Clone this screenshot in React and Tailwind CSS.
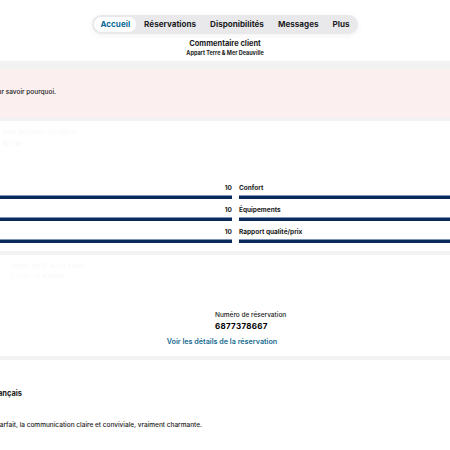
import React from 'react';

const tabs = ['Accueil', 'Réservations', 'Disponibilités', 'Messages', 'Plus'];

const scores = [
  { left: 'Propreté', right: 'Confort' },
  { left: 'Personnel', right: 'Équipements' },
  { left: 'Situation géographique', right: 'Rapport qualité/prix' },
];

const Bar = () => <div className="h-[3px] w-full bg-[#0b2a5c] shadow-[0_-1px_0_#7d93b8]" />;

const App = () => {
  return (
    <div
      className="w-[450px] h-[450px] overflow-hidden bg-white text-[#1a1a1a]"
      style={{ fontFamily: 'Inter, "Open Sans", sans-serif' }}
    >
      {/* top nav */}
      <div className="flex justify-center pt-[15px]">
        <div className="flex items-center gap-[2px] rounded-full bg-[#e9e9ec] p-[2px] shadow-[0_1px_6px_rgba(0,0,0,0.06)]">
          {tabs.map((t, i) => (
            <div
              key={t}
              className={
                i === 0
                  ? 'rounded-full bg-white px-[6px] h-[15px] flex items-center text-[8.1px] font-bold text-[#0a6a96]'
                  : 'px-[6px] h-[15px] flex items-center text-[8.1px] font-bold text-[#1c1c1e]'
              }
            >
              {t}
            </div>
          ))}
        </div>
      </div>

      <div className="mt-[6px] flex flex-col items-center leading-none">
        <div className="text-[7.5px] font-bold">Commentaire client</div>
        <div className="mt-[3px] text-[5.5px] font-bold">Appart Terre &amp; Mer Deauville</div>
      </div>

      {/* alert */}
      <div className="mt-[5px] border-t-[8px] border-b-[4px] border-[#f2f2f2] bg-[#fcefef] h-[60px] flex items-center">
        <div className="w-[56px] flex justify-end whitespace-nowrap text-[6.5px] font-medium">
          Cet avis a été masqué. Cliquez ici pour savoir pourquoi.
        </div>
      </div>

      <div className="h-[5px]" />
      <div className="pl-[2px] text-[6.5px] text-[#f9f9f9] leading-[12px]">
        <div>Note générale du séjour</div>
        <div className="font-bold">10 / 10</div>
      </div>

      {/* scores */}
      <div className="mt-[34px] grid grid-cols-[232px_1fr] gap-x-[7px]">
        {scores.map((s) => (
          <React.Fragment key={s.right}>
            <div className="flex flex-col h-[22px]">
              <div className="flex justify-end text-[6.5px] font-bold leading-none h-[9px] items-center whitespace-nowrap">
                <span>10</span>
              </div>
              <div className="mt-[3px]">
                <Bar />
              </div>
            </div>
            <div className="flex flex-col h-[22px]">
              <div className="text-[6.5px] font-bold leading-none h-[9px] flex items-center whitespace-nowrap">
                {s.right}
              </div>
              <div className="mt-[3px]">
                <Bar />
              </div>
            </div>
          </React.Fragment>
        ))}
      </div>

      <div className="mt-[1px] h-[4px] bg-[#f2f2f2]" />

      <div className="pl-[10px] pt-[6px] text-[6.5px] text-[#f9f9f9] leading-[10px]">
        <div>Séjour du 12 au 14 juillet</div>
        <div>2 nuits · 2 adultes</div>
      </div>

      {/* booking */}
      <div className="mt-[31px]">
        <div className="pl-[215px] leading-none">
          <div className="text-[6.5px] font-medium">Numéro de réservation</div>
          <div className="mt-[3px] text-[8px] font-bold tracking-[0.3px] text-black">6877378667</div>
        </div>
        <div className="mt-[8px] flex justify-center pr-[6px] text-[7.2px] font-semibold text-[#176c90] leading-none">
          Voir les détails de la réservation
        </div>
      </div>

      <div className="mt-[11px] h-[4px] bg-[#f2f2f2]" />

      {/* review body */}
      <div className="mt-[30px] w-[22px] flex justify-end whitespace-nowrap text-[7.5px] font-bold leading-none">
        Rédigé en français
      </div>
      <div className="mt-[25px] w-[202px] flex justify-end whitespace-nowrap text-[6.5px] font-medium leading-none">
        Tout était parfait, la communication claire et conviviale, vraiment charmante.
      </div>
    </div>
  );
};

export default App;
